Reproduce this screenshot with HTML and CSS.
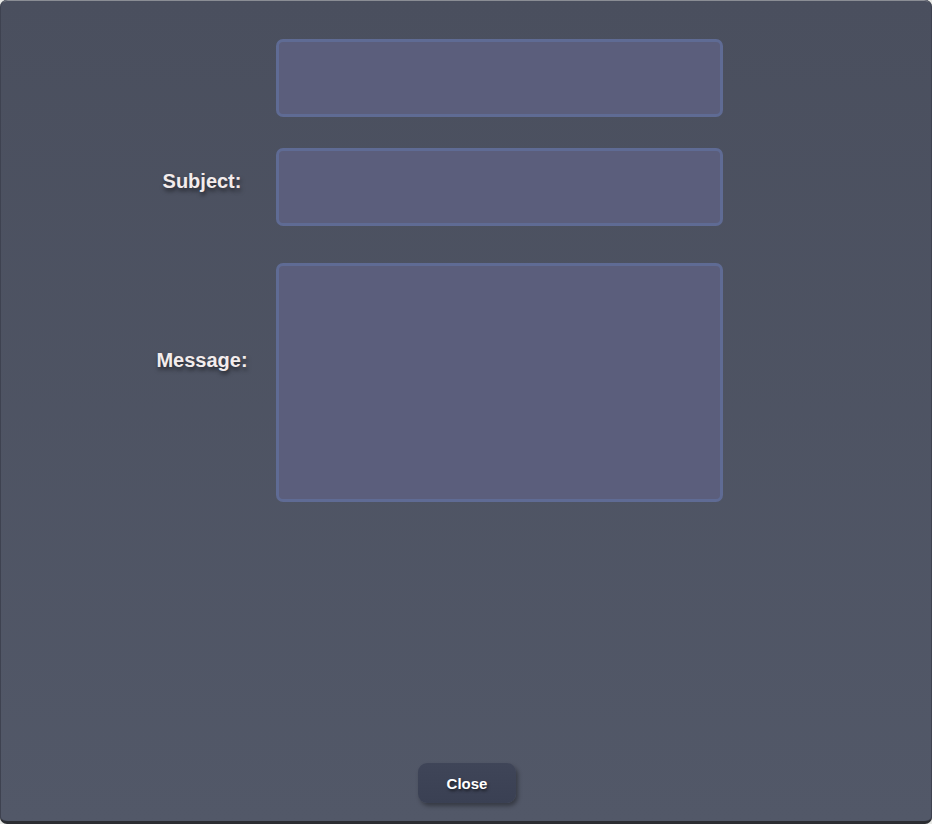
FILE: index.html
```html
<!DOCTYPE html>
<html>
<head>
<meta charset="utf-8">
<link rel="stylesheet" href="styles.css">
</head>
<body>
<div class="panel">
  <form class="form">
    <div class="row row-first">
      <span class="label"></span>
      <input class="field" type="text">
    </div>
    <div class="row row-subject">
      <label class="label">Subject:</label>
      <input class="field" type="text">
    </div>
    <div class="row row-message">
      <label class="label">Message:</label>
      <textarea class="field area"></textarea>
    </div>
  </form>
  <div class="footer">
    <button class="close" type="button">Close</button>
  </div>
</div>
</body>
</html>
```

FILE: styles.css
```css
html, body {
  margin: 0;
  padding: 0;
  background: #e8e9e6;
  width: 932px;
  height: 824px;
  overflow: hidden;
}
.panel {
  box-sizing: border-box;
  width: 932px;
  height: 824px;
  border-radius: 7px;
  background: linear-gradient(#4a4f5e, #525868);
  border-bottom: 3px solid #2b2d32;
  box-shadow: inset 1px 0 0 #3e4250, inset -1px 0 0 #3e4250, inset 0 1px 0 #8a8d94;
  display: flex;
  flex-direction: column;
  font-family: "Liberation Sans", Arial, sans-serif;
}
.form {
  display: flex;
  flex-direction: column;
  padding-top: 39px;
}
.row {
  display: flex;
  align-items: flex-start;
}
.row-subject { margin-top: 31px; }
.row-message { margin-top: 37px; }
.label {
  width: 122px;
  margin-left: 141px;
  margin-right: 13px;
  text-align: center;
  line-height: 24px;
  color: #f3ecec;
  font-weight: bold;
  font-size: 20px;
  text-shadow: 1px 3px 4px rgba(0,0,0,0.55);
}
.row-subject .label { margin-top: 21px; }
.row-message .label { margin-top: 85px; }
.field {
  box-sizing: border-box;
  display: block;
  width: 447px;
  height: 78px;
  margin: 0;
  border: 3px solid #5f6b94;
  border-radius: 7px;
  background: #5b5e7c;
  outline: none;
  padding: 0;
}
.area {
  height: 239px;
  resize: none;
}
.footer {
  margin-top: auto;
  display: flex;
  justify-content: center;
  padding-bottom: 18px;
  padding-left: 2px;
}
.close {
  width: 98px;
  height: 40px;
  border: none;
  border-radius: 9px;
  background: linear-gradient(#3f4558, #3a4053);
  color: #ffffff;
  font-family: "Liberation Sans", Arial, sans-serif;
  font-weight: bold;
  font-size: 15px;
  text-shadow: 1px 2px 3px rgba(0,0,0,0.6);
  box-shadow: 2px 3px 4px rgba(0,0,0,0.35);
  cursor: pointer;
}
```
